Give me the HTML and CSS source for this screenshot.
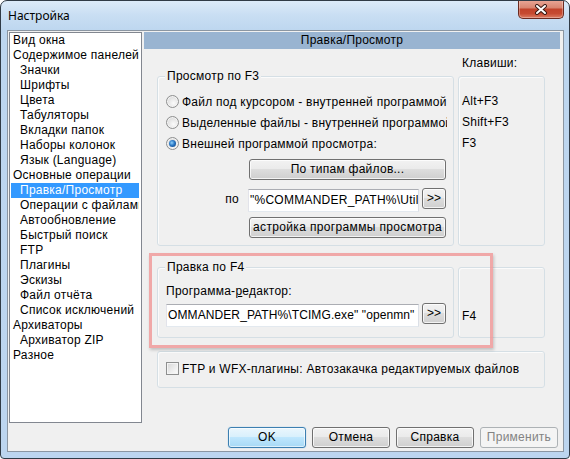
FILE: index.html
```html
<!DOCTYPE html>
<html>
<head>
<meta charset="utf-8">
<link rel="stylesheet" href="styles.css">
</head>
<body>
<div class="window">
  <div class="titlebar">
    <span class="title">Настройка</span>
    <div class="close">
      <svg width="14" height="11" viewBox="0 0 14 11"><path d="M3 2 L11 9 M11 2 L3 9" stroke="#3b1a14" stroke-width="4" stroke-linecap="round"/><path d="M3 2 L11 9 M11 2 L3 9" stroke="#ffffff" stroke-width="2" stroke-linecap="round"/></svg>
    </div>
  </div>
  <div class="client">
    <div class="main">
      <div class="tree">
        <div class="item">Вид окна</div>
        <div class="item">Содержимое панелей</div>
        <div class="item sub">Значки</div>
        <div class="item sub">Шрифты</div>
        <div class="item sub">Цвета</div>
        <div class="item sub">Табуляторы</div>
        <div class="item sub">Вкладки папок</div>
        <div class="item sub">Наборы колонок</div>
        <div class="item sub">Язык (Language)</div>
        <div class="item">Основные операции</div>
        <div class="item sub sel">Правка/Просмотр</div>
        <div class="item sub">Операции с файлами</div>
        <div class="item sub">Автообновление</div>
        <div class="item sub">Быстрый поиск</div>
        <div class="item sub">FTP</div>
        <div class="item sub">Плагины</div>
        <div class="item sub">Эскизы</div>
        <div class="item sub">Файл отчёта</div>
        <div class="item sub">Список исключений</div>
        <div class="item">Архиваторы</div>
        <div class="item sub">Архиватор ZIP</div>
        <div class="item">Разное</div>
      </div>
      <div class="panel">
        <div class="header">Правка/Просмотр</div>
        <div class="keys-label">Клавиши:</div>
        <div class="row row-f3">
          <div class="group g-f3">
            <span class="legend">Просмотр по F3</span>
            <div class="opt"><span class="radio"></span><span class="txt">Файл под курсором - внутренней программой</span></div>
            <div class="opt"><span class="radio"></span><span class="txt">Выделенные файлы - внутренней программой</span></div>
            <div class="opt"><span class="radio checked"></span><span class="txt">Внешней программой просмотра:</span></div>
            <div class="actions">
              <div class="btn wide">По типам файлов...</div>
              <div class="path-row">
                <span class="lbl">по</span>
                <div class="input in-f3">"%COMMANDER_PATH%\Util</div>
                <div class="btn small">&gt;&gt;</div>
              </div>
              <div class="btn wide second">астройка программы просмотра</div>
            </div>
          </div>
          <div class="keys k-f3">
            <div class="key">Alt+F3</div>
            <div class="key">Shift+F3</div>
            <div class="key">F3</div>
          </div>
        </div>
        <div class="row row-f4">
          <div class="group g-f4">
            <span class="legend">Правка по F4</span>
            <div class="caption">Программа-<u>р</u>едактор:</div>
            <div class="path-row">
              <div class="input in-f4">OMMANDER_PATH%\TCIMG.exe" "openmn"</div>
              <div class="btn small">&gt;&gt;</div>
            </div>
          </div>
          <div class="keys k-f4">
            <div class="key">F4</div>
          </div>
        </div>
        <div class="group g-check">
          <div class="opt chk"><span class="checkbox"></span><span class="txt">FTP и WFX-плагины: Автозакачка редактируемых файлов</span></div>
        </div>
      </div>
    </div>
    <div class="buttons">
      <div class="btn dlg default">OK</div>
      <div class="btn dlg">Отмена</div>
      <div class="btn dlg">Справка</div>
      <div class="btn dlg disabled">Применить</div>
    </div>
    <div class="highlight"></div>
  </div>
</div>
</body>
</html>
```

FILE: styles.css
```css
body {
  margin: 0;
  font-family: "Liberation Sans", Arial, sans-serif;
  font-size: 12px;
  letter-spacing: 0.25px;
  color: #000;
}

.window {
  box-sizing: border-box;
  width: 570px;
  height: 459px;
  border: 1px solid #303b46;
  border-radius: 7px 7px 4px 4px;
  padding: 0 5px 6px 6px;
  background: linear-gradient(180deg, #dcebf9 0px, #c9def3 14px, #bdd6ef 30px, #bcd5ef 100%);
  display: flex;
  flex-direction: column;
  overflow: hidden;
}

.titlebar {
  height: 29px;
  flex: none;
  display: flex;
  align-items: center;
}

.title {
  font-family: "Noto Sans", "Open Sans", sans-serif;
  font-size: 12px;
  letter-spacing: 0;
  margin-left: 1px;
  color: #000;
}

.close {
  margin-left: auto;
  align-self: flex-start;
  margin-top: -1px;
  width: 46px;
  height: 19px;
  box-sizing: border-box;
  border: 1px solid #6b2a20;
  border-top: none;
  border-radius: 0 0 5px 5px;
  background: linear-gradient(180deg, #eaa898 0%, #d98671 42%, #c2432b 52%, #c64a31 75%, #dc7c62 100%);
  box-shadow: inset 0 0 0 1px rgba(255, 255, 255, 0.3);
  display: flex;
  align-items: center;
  justify-content: center;
}

.client {
  flex: 1;
  box-sizing: border-box;
  border: 1px solid #8b96a2;
  background: #f0f0f0;
  display: flex;
  flex-direction: column;
  position: relative;
}

.main {
  display: flex;
  padding-top: 1px;
  height: 392px;
  box-sizing: border-box;
}

.tree {
  margin-left: 1px;
  width: 133px;
  height: 391px;
  box-sizing: border-box;
  border: 1px solid #828790;
  background: #fff;
  overflow: hidden;
}

.item {
  height: 15px;
  line-height: 15px;
  margin: 0 2px 0 1px;
  padding-left: 2px;
  white-space: nowrap;
  overflow: hidden;
}

.item.sub {
  padding-left: 9px;
}

.item.sel {
  background: #3399ff;
  color: #fff;
}

.panel {
  margin-left: 2px;
  width: 416px;
}

.header {
  height: 17px;
  line-height: 17px;
  background: #99b4d1;
  text-align: center;
}

.keys-label {
  height: 13px;
  line-height: 13px;
  margin: 8px 0 6px 318px;
}

.row {
  display: flex;
  gap: 4px;
  margin-left: 13px;
}

.row-f3 {
  height: 170px;
}

.row-f4 {
  height: 71px;
  margin-top: 21px;
}

.group,
.keys {
  box-sizing: border-box;
  border: 1px solid #d5dfe5;
  border-radius: 3px;
  box-shadow: inset 1px 1px 0 #fbfbfb;
  position: relative;
}

.group {
  width: 297px;
}

.keys {
  width: 87px;
  padding-left: 3px;
}

.legend {
  position: absolute;
  top: -7px;
  left: 7px;
  padding: 0 2px;
  height: 13px;
  line-height: 13px;
  background: #f0f0f0;
}

.g-f3 {
  padding: 14px 0 0 8px;
}

.opt {
  height: 21px;
  display: flex;
  align-items: center;
  gap: 3px;
  width: 281px;
  overflow: hidden;
  white-space: nowrap;
}

.txt {
  white-space: nowrap;
}

.radio {
  flex: none;
  width: 13px;
  height: 13px;
  box-sizing: border-box;
  border-radius: 50%;
  border: 1px solid #8e8f8f;
  background: radial-gradient(circle at 60% 65%, #fbfbfb 0%, #e8e8e8 45%, #cfcfcf 100%);
  box-shadow: inset 0 0 0 1px #f4f4f4;
  position: relative;
}

.radio.checked::after {
  content: "";
  position: absolute;
  left: 2px;
  top: 2px;
  width: 7px;
  height: 7px;
  border-radius: 50%;
  background: radial-gradient(circle at 40% 40%, #8fd0fb 0%, #2a78c6 45%, #0e3b73 100%);
}

.checkbox {
  flex: none;
  width: 13px;
  height: 13px;
  box-sizing: border-box;
  border: 1px solid #8e8f8f;
  background: linear-gradient(135deg, #d6d6d6 0%, #f2f2f2 70%, #fcfcfc 100%);
  box-shadow: inset 0 0 0 1px #f4f4f4;
}

.actions {
  display: flex;
  flex-direction: column;
  align-items: flex-end;
  margin: 5px 7px 0 0;
}

.btn {
  box-sizing: border-box;
  height: 21px;
  border: 1px solid #707070;
  border-radius: 3px;
  background: linear-gradient(180deg, #f2f2f2 0%, #ebebeb 45%, #dddddd 50%, #cfcfcf 100%);
  box-shadow: inset 0 0 0 1px rgba(255, 255, 255, 0.75);
  text-align: center;
  line-height: 19px;
  white-space: nowrap;
  overflow: hidden;
}

.btn.wide {
  width: 197px;
}

.btn.second {
  margin-top: 5px;
  letter-spacing: 0.35px;
}

.btn.small {
  width: 24px;
  flex: none;
  letter-spacing: 0;
}

.path-row {
  display: flex;
  align-items: flex-start;
  gap: 3px;
  height: 24px;
}

.g-f3 .path-row {
  margin-top: 8px;
}

.lbl {
  line-height: 23px;
  margin-right: 6px;
}

.input {
  box-sizing: border-box;
  height: 23px;
  margin-top: 1px;
  border: 1px solid;
  border-color: #abadb3 #dbdfe6 #e3e9ef #e2e3ea;
  background: #fff;
  line-height: 21px;
  padding-left: 1px;
  white-space: nowrap;
  overflow: hidden;
}

.in-f3 {
  width: 171px;
}

.in-f4 {
  width: 253px;
  letter-spacing: 0.1px;
}

.key {
  height: 21px;
  line-height: 21px;
}

.k-f3 {
  padding-top: 14px;
}

.g-f4 {
  padding: 17px 0 0 8px;
}

.caption {
  height: 13px;
  line-height: 13px;
  margin-bottom: 5px;
}

.k-f4 {
  padding-top: 38px;
}

.g-check {
  width: 388px;
  height: 37px;
  margin: 13px 0 0 13px;
  padding: 10px 0 0 8px;
}

.opt.chk {
  height: 13px;
  width: auto;
}

.buttons {
  display: flex;
  justify-content: flex-end;
  gap: 6px;
  padding-right: 5px;
  margin-top: 4px;
}

.btn.dlg {
  width: 78px;
}

.btn.default {
  border-color: #3c7fb1;
  background: linear-gradient(180deg, #eaf6fd 0%, #d9f0fc 45%, #bee6fd 50%, #a7d9f5 100%);
  box-shadow: inset 0 0 0 1px rgba(255, 255, 255, 0.6), 0 0 1px #6ab0e0;
}

.btn.disabled {
  border-color: #adb2b5;
  background: #f4f4f4;
  color: #838383;
  box-shadow: none;
}

.highlight {
  position: absolute;
  left: 141px;
  top: 222px;
  width: 344px;
  height: 95px;
  box-sizing: border-box;
  border: 3px solid rgba(240, 150, 150, 0.8);
  box-shadow: 1px 2px 3px rgba(0, 0, 0, 0.2);
  pointer-events: none;
}
```
